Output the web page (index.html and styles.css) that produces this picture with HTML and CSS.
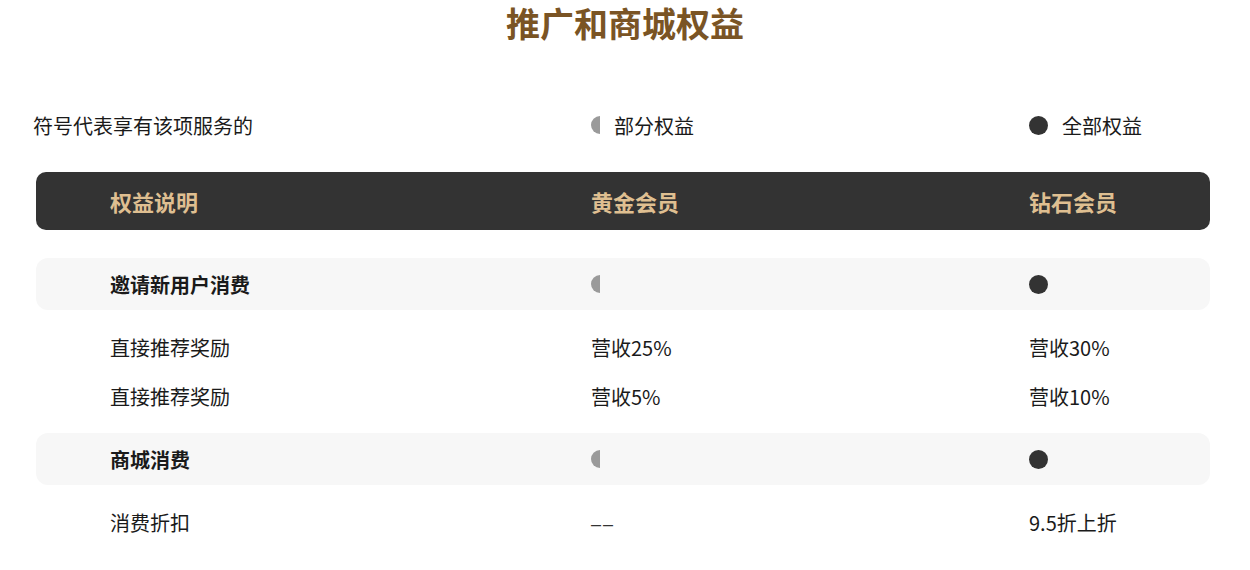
FILE: index.html
```html
<!DOCTYPE html>
<html lang="zh-CN">
<head>
<meta charset="utf-8">
<title>推广和商城权益</title>
<link rel="stylesheet" href="styles.css">
</head>
<body>
<div class="page">
  <h1 class="title">推广和商城权益</h1>
  <div class="legend">
    <div class="legend-cell">符号代表享有该项服务的</div>
    <div class="legend-cell"><span class="dot half"></span><span class="legend-label">部分权益</span></div>
    <div class="legend-cell"><span class="dot full"></span><span class="legend-label">全部权益</span></div>
  </div>
  <div class="table">
    <div class="head grid">
      <div>权益说明</div>
      <div>黄金会员</div>
      <div>钻石会员</div>
    </div>
    <div class="group grid first">
      <div class="group-name">邀请新用户消费</div>
      <div><span class="dot half"></span></div>
      <div><span class="dot full"></span></div>
    </div>
    <div class="row grid">
      <div>直接推荐奖励</div>
      <div>营收25%</div>
      <div>营收30%</div>
    </div>
    <div class="row grid">
      <div>直接推荐奖励</div>
      <div>营收5%</div>
      <div>营收10%</div>
    </div>
    <div class="group grid">
      <div class="group-name">商城消费</div>
      <div><span class="dot half"></span></div>
      <div><span class="dot full"></span></div>
    </div>
    <div class="row grid">
      <div>消费折扣</div>
      <div><span class="dash">––</span></div>
      <div>9.5折上折</div>
    </div>
  </div>
</div>
</body>
</html>
```
FILE: styles.css
```css
html, body {
  margin: 0;
  padding: 0;
  background: #ffffff;
}
body {
  font-family: "Noto Sans CJK SC", "Noto Sans", sans-serif;
  color: #1a1a1a;
  font-size: 20px;
}
.page {
  width: 1250px;
}
.title {
  margin: 0;
  height: 50px;
  line-height: 46px;
  text-align: center;
  font-size: 34px;
  font-weight: 700;
  color: #7a5424;
}
.legend {
  margin: 55px 0 0 33px;
  height: 40px;
  display: grid;
  grid-template-columns: 558px 438px 1fr;
  align-items: center;
}
.legend-cell {
  display: flex;
  align-items: center;
}
.legend-label {
  margin-left: 14px;
}
.table {
  margin: 27px 40px 0 36px;
}
.grid {
  display: grid;
  grid-template-columns: 481px 438px 1fr;
  align-items: center;
  padding-left: 74px;
}
.grid > div {
  display: flex;
  align-items: center;
}
.head {
  height: 58px;
  background: #333333;
  border-radius: 10px;
  color: #dfbf91;
  font-size: 22px;
  font-weight: 700;
}
.group {
  height: 52px;
  margin-top: 12px;
  background: #f7f7f7;
  border-radius: 12px;
  font-weight: 700;
}
.group.first {
  margin-top: 28px;
}
.row {
  height: 49px;
}
.group + .row {
  margin-top: 13px;
}
.dot {
  display: inline-block;
  height: 18px;
}
.dot.half {
  width: 9px;
  background: #9a9a9a;
  border-radius: 9px 0 0 9px;
}
.dot.full {
  width: 19px;
  height: 19px;
  background: #333333;
  border-radius: 50%;
}
.dash {
  color: #333333;
  letter-spacing: 2px;
  font-family: "Liberation Sans", sans-serif;
  font-size: 18px;
  position: relative;
  top: 2px;
}
```
